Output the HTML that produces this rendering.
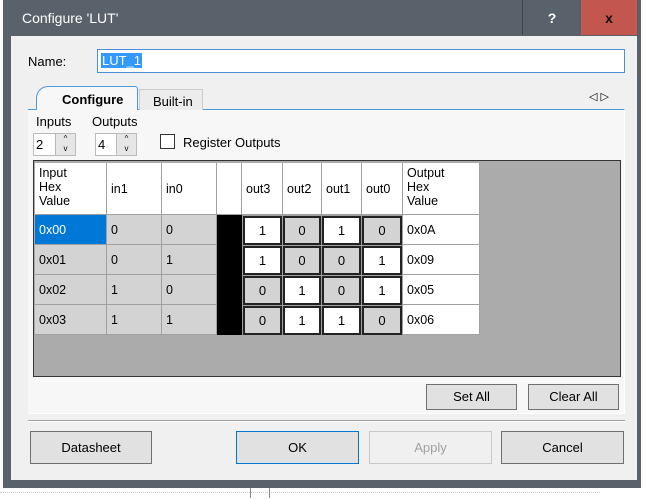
<!DOCTYPE html>
<html><head><style>
*{box-sizing:border-box;margin:0;padding:0}
body{width:653px;height:498px;background:#fff;position:relative;overflow:hidden;font-family:"Liberation Sans",sans-serif;font-size:12px;color:#000}
.a{position:absolute}
.btn{position:absolute;background:#e1e1e1;border:1px solid #adadad;text-align:center;font-size:13px}
.c{position:absolute;font-size:12.5px;padding-left:4px}
.g{background:#d3d3d3;border-right:1px solid #a0a0a0;border-bottom:1px solid #a0a0a0}
.w{background:#fff;border-right:1px solid #a0a0a0;border-bottom:1px solid #a0a0a0}
.ob{position:absolute;border:2px solid #222;text-align:center;font-size:13px}
</style></head><body>
<div class="a" style="left:0;top:490;width:600px;height:8px;border-top:1px dotted #ccc;top:492px"></div>
<div class="a" style="left:250px;top:487px;width:20px;height:11px;border-left:1px solid #888;border-right:1px solid #888"></div>
<div class="a" style="left:3px;top:0;width:638px;height:488px;background:#59616a"></div>
<div class="a" style="left:22px;top:10px;color:#fff;font-size:14px">Configure 'LUT'</div>
<div class="a" style="left:522px;top:0;width:59px;height:35px;border-left:1px solid #444;color:#fff;font-weight:bold;font-size:14px;text-align:center;line-height:36px">?</div>
<div class="a" style="left:581px;top:0;width:56px;height:35px;background:#c4574d;color:#111;font-weight:bold;font-size:14px;text-align:center;line-height:36px">x</div>
<div class="a" style="left:11px;top:36px;width:626px;height:444px;background:#f0f0f0"></div>
<div class="a" style="left:28px;top:54px;font-size:13px">Name:</div>
<div class="a" style="left:97px;top:49px;width:528px;height:24px;background:#fff;border:1px solid #4a90d9"><span style="position:absolute;left:3px;top:3px;background:#3399ff;color:#fff;font-size:13px;padding:0 1px">LUT_1</span></div>
<div class="a" style="left:28px;top:109px;width:597px;height:305px;background:#f7f7f7;border-top:1px solid #4a9ae0;border-right:1px solid #fff;border-bottom:1px solid #fff"></div>
<div class="a" style="left:139px;top:89px;width:64px;height:21px;background:#ececec;border:1px solid #ccc;border-bottom:none;font-size:13px;padding:4px 0 0 13px">Built-in</div>
<div class="a" style="left:36px;top:86px;width:102px;height:24px;background:#f7f7f7;border:1px solid #4a9ae0;border-bottom:none;border-radius:12px 3px 0 0;font-weight:bold;font-size:13px;padding:5px 0 0 25px">Configure</div>
<div class="a" style="left:589px;top:90px;font-size:11px">◁ ▷</div>
<div class="a" style="left:36px;top:114px;font-size:13px">Inputs</div>
<div class="a" style="left:92px;top:114px;font-size:13px">Outputs</div>
<div class="a" style="left:33px;top:133px;width:43px;height:23px;background:#fff;border:1px solid #bbb;font-size:13px;padding:3px 2px">2<div class="a" style="left:21px;top:0;width:20px;height:21px;background:#e6e6e6;border-left:1px solid #bbb;font-size:8px;text-align:center;line-height:10px">^<br>v</div></div>
<div class="a" style="left:95px;top:133px;width:42px;height:23px;background:#fff;border:1px solid #bbb;font-size:13px;padding:3px 2px">4<div class="a" style="left:20px;top:0;width:20px;height:21px;background:#e6e6e6;border-left:1px solid #bbb;font-size:8px;text-align:center;line-height:10px">^<br>v</div></div>
<div class="a" style="left:160px;top:134px;width:15px;height:15px;background:#fff;border:1px solid #333"></div>
<div class="a" style="left:183px;top:135px;font-size:13px">Register Outputs</div>
<div class="a" style="left:33px;top:160px;width:588px;height:217px;background:#ababab;border:1px solid #333"></div>
<div class="c w" style="left:35px;top:163px;width:72px;height:52px;line-height:14px;padding-top:3px">Input<br>Hex<br>Value</div>
<div class="c w" style="left:107px;top:163px;width:55px;height:52px;line-height:52px">in1</div>
<div class="c w" style="left:162px;top:163px;width:55px;height:52px;line-height:52px">in0</div>
<div class="c w" style="left:217px;top:163px;width:25px;height:52px"></div>
<div class="c w" style="left:242px;top:163px;width:41px;height:52px;line-height:52px">out3</div>
<div class="c w" style="left:283px;top:163px;width:39px;height:52px;line-height:52px">out2</div>
<div class="c w" style="left:322px;top:163px;width:40px;height:52px;line-height:52px">out1</div>
<div class="c w" style="left:362px;top:163px;width:41px;height:52px;line-height:52px">out0</div>
<div class="c w" style="left:403px;top:163px;width:77px;height:52px;line-height:14px;padding-top:3px">Output<br>Hex<br>Value</div>
<!-- rows -->
<div class="c g" style="left:35px;top:215px;width:72px;height:30px;line-height:30px;background:#0078d7;color:#fff">0x00</div>
<div class="c g" style="left:107px;top:215px;width:55px;height:30px;line-height:30px">0</div>
<div class="c g" style="left:162px;top:215px;width:55px;height:30px;line-height:30px">0</div>
<div class="c g" style="left:35px;top:245px;width:72px;height:30px;line-height:30px">0x01</div>
<div class="c g" style="left:107px;top:245px;width:55px;height:30px;line-height:30px">0</div>
<div class="c g" style="left:162px;top:245px;width:55px;height:30px;line-height:30px">1</div>
<div class="c g" style="left:35px;top:275px;width:72px;height:30px;line-height:30px">0x02</div>
<div class="c g" style="left:107px;top:275px;width:55px;height:30px;line-height:30px">1</div>
<div class="c g" style="left:162px;top:275px;width:55px;height:30px;line-height:30px">0</div>
<div class="c g" style="left:35px;top:305px;width:72px;height:30px;line-height:30px">0x03</div>
<div class="c g" style="left:107px;top:305px;width:55px;height:30px;line-height:30px">1</div>
<div class="c g" style="left:162px;top:305px;width:55px;height:30px;line-height:30px">1</div>
<div class="a" style="left:217px;top:215px;width:25px;height:120px;background:#000"></div>
<div class="c w" style="left:403px;top:215px;width:77px;height:30px;line-height:30px">0x0A</div>
<div class="c w" style="left:403px;top:245px;width:77px;height:30px;line-height:30px">0x09</div>
<div class="c w" style="left:403px;top:275px;width:77px;height:30px;line-height:30px">0x05</div>
<div class="c w" style="left:403px;top:305px;width:77px;height:30px;line-height:30px">0x06</div>
<div class="a" style="left:242px;top:215px;width:161px;height:120px;background:#a0a0a0"></div>
<div class="ob" style="left:243px;top:216px;width:39px;height:29px;line-height:25px;background:#fff">1</div>
<div class="ob" style="left:283px;top:216px;width:38px;height:29px;line-height:25px;background:#d3d3d3">0</div>
<div class="ob" style="left:322px;top:216px;width:39px;height:29px;line-height:25px;background:#fff">1</div>
<div class="ob" style="left:362px;top:216px;width:40px;height:29px;line-height:25px;background:#d3d3d3">0</div>
<div class="ob" style="left:243px;top:246px;width:39px;height:29px;line-height:25px;background:#fff">1</div>
<div class="ob" style="left:283px;top:246px;width:38px;height:29px;line-height:25px;background:#d3d3d3">0</div>
<div class="ob" style="left:322px;top:246px;width:39px;height:29px;line-height:25px;background:#d3d3d3">0</div>
<div class="ob" style="left:362px;top:246px;width:40px;height:29px;line-height:25px;background:#fff">1</div>
<div class="ob" style="left:243px;top:276px;width:39px;height:29px;line-height:25px;background:#d3d3d3">0</div>
<div class="ob" style="left:283px;top:276px;width:38px;height:29px;line-height:25px;background:#fff">1</div>
<div class="ob" style="left:322px;top:276px;width:39px;height:29px;line-height:25px;background:#d3d3d3">0</div>
<div class="ob" style="left:362px;top:276px;width:40px;height:29px;line-height:25px;background:#fff">1</div>
<div class="ob" style="left:243px;top:306px;width:39px;height:29px;line-height:25px;background:#d3d3d3">0</div>
<div class="ob" style="left:283px;top:306px;width:38px;height:29px;line-height:25px;background:#fff">1</div>
<div class="ob" style="left:322px;top:306px;width:39px;height:29px;line-height:25px;background:#fff">1</div>
<div class="ob" style="left:362px;top:306px;width:40px;height:29px;line-height:25px;background:#d3d3d3">0</div>
<div class="btn" style="left:426px;top:384px;width:91px;height:26px;line-height:24px;border-color:#707070">Set All</div>
<div class="btn" style="left:528px;top:384px;width:91px;height:26px;line-height:24px;border-color:#707070">Clear All</div>
<div class="a" style="left:28px;top:420px;width:597px;height:2px;border-top:1px solid #a0a0a0;border-bottom:1px solid #fff"></div>
<div class="btn" style="left:30px;top:431px;width:122px;height:33px;line-height:31px;border-color:#707070">Datasheet</div>
<div class="btn" style="left:236px;top:431px;width:123px;height:33px;line-height:31px;border-color:#0078d7">OK</div>
<div class="btn" style="left:369px;top:431px;width:123px;height:33px;line-height:31px;background:#f0f0f0;border-color:#c8c8c8;color:#a0a0a0">Apply</div>
<div class="btn" style="left:501px;top:431px;width:123px;height:33px;line-height:31px;border-color:#707070">Cancel</div>
</body></html>
